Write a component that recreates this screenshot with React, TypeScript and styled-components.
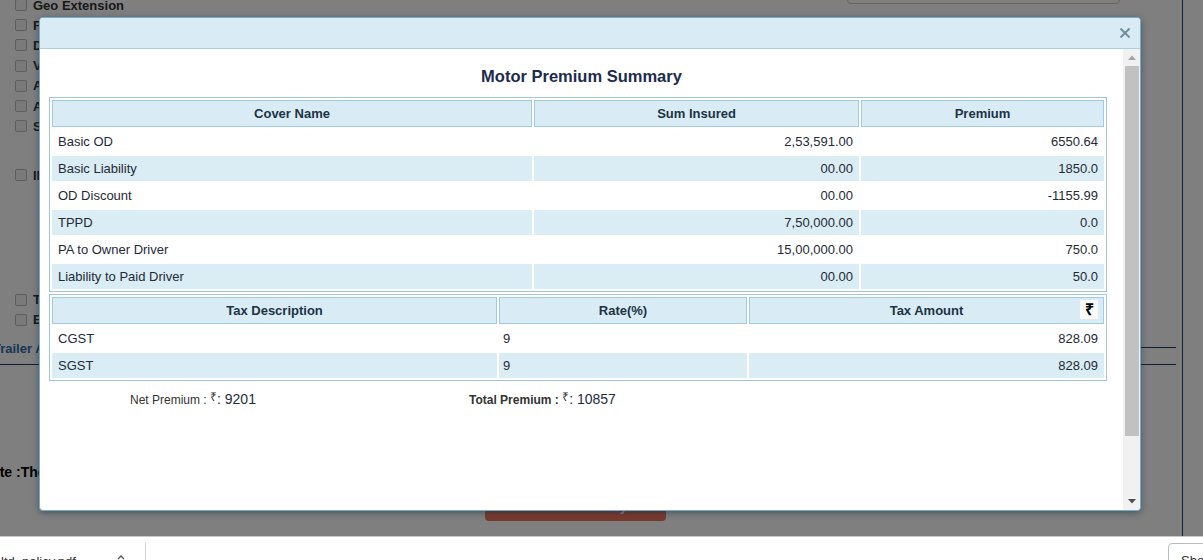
import React from "react";
import styled, { createGlobalStyle } from "styled-components";

const GlobalStyle = createGlobalStyle`
  *, *::before, *::after { box-sizing: border-box; }
  html, body { margin: 0; padding: 0; }
  body {
    font-family: "Liberation Sans", Arial, sans-serif;
    background: #fff;
    overflow: hidden;
  }
`;

const Page = styled.div`
  width: 1203px;
  height: 560px;
  display: flex;
  flex-direction: column;
  overflow: hidden;
`;

const Main = styled.div`
  position: relative;
  height: 536px;
  flex: none;
  overflow: hidden;
  background: #fff;
`;

/* ---------- background page (dimmed) ---------- */
const BgLayout = styled.div`
  display: flex;
  height: 100%;
`;

const BgPane = styled.div`
  width: 1183px;
  border-right: 1px solid #1a466a;
  display: flex;
  flex-direction: column;
`;

const TopArea = styled.div`
  display: flex;
  align-items: flex-start;
`;

const CheckList = styled.div`
  flex: 1;
  margin-top: -5px;
  padding-left: 15px;
  display: flex;
  flex-direction: column;
`;

const CheckRow = styled.div<{ $gap?: number }>`
  height: 20.2px;
  margin-top: ${(p) => p.$gap ?? 0}px;
  display: flex;
  align-items: center;
  gap: 6px;
`;

const CheckBox = styled.span`
  width: 12px;
  height: 12px;
  border: 1px solid #bbb;
  border-radius: 2px;
  background: #f4f4f4;
  flex: none;
`;

const CheckLabel = styled.span`
  font-size: 13px;
  font-weight: bold;
  color: #333;
  white-space: nowrap;
`;

const InputStub = styled.div`
  width: 273px;
  height: 34px;
  margin-top: -30px;
  margin-right: 62px;
  border: 1px solid #c8c8c8;
  border-radius: 4px;
  background: #fff;
`;

const SectionBar = styled.div`
  height: 35px;
  margin-right: 6px;
  border-bottom: 1px solid #1a466a;
  display: flex;
  align-items: flex-end;
  justify-content: space-between;
`;

const SectionTitle = styled.span`
  margin-left: -7px;
  padding-bottom: 7px;
  line-height: 16px;
  font-size: 13px;
  font-weight: bold;
  color: #2f6eaa;
  white-space: nowrap;
`;

const SectionCap = styled.span`
  width: 35px;
  height: 17px;
  border-top: 1px solid #1a466a;
`;

const NoteLine = styled.div`
  margin-top: 99px;
  margin-left: -19px;
  line-height: 16px;
  font-size: 14px;
  font-weight: bold;
  color: #000;
  white-space: nowrap;
`;

const PayButton = styled.div`
  margin-top: 11px;
  margin-left: 485px;
  width: 181px;
  height: 30px;
  border-radius: 4px;
  background: #f2745a;
  color: #fff;
  font-size: 14px;
  font-weight: bold;
  line-height: 30px;
  text-align: center;
`;

const Overlay = styled.div`
  position: absolute;
  inset: 0;
  background: rgba(0, 0, 0, 0.5);
`;

/* ---------- modal ---------- */
const Modal = styled.div`
  position: absolute;
  left: 39px;
  top: 17px;
  width: 1102px;
  height: 494px;
  border: 1px solid #76abc6;
  border-radius: 4px;
  background: #fff;
  box-shadow: 0 2px 7px rgba(0, 40, 70, 0.45);
  display: flex;
  flex-direction: column;
  overflow: hidden;
`;

const ModalHeader = styled.div`
  height: 31px;
  flex: none;
  background: #d9ecf5;
  border-bottom: 1px solid #a9d0e2;
  display: flex;
  align-items: center;
  justify-content: flex-end;
  padding-right: 10px;
`;

const CloseButton = styled.span`
  width: 10px;
  height: 10px;
  display: flex;
`;

const ModalBody = styled.div`
  flex: 1;
  display: flex;
  min-height: 0;
`;

const BodyContent = styled.div`
  flex: 1;
  overflow: hidden;
  padding-top: 17px;
`;

const Scrollbar = styled.div`
  width: 17px;
  flex: none;
  background: #f1f1f1;
  display: flex;
  flex-direction: column;
`;

const ScrollArrow = styled.div`
  height: 17px;
  flex: none;
  display: flex;
  align-items: center;
  justify-content: center;
`;

const ScrollThumb = styled.div`
  height: 370px;
  margin: 0 1px 0 2px;
  background: #c1c1c1;
  flex: none;
`;

const ScrollSpacer = styled.div`
  flex: 1;
`;

const Title = styled.div`
  text-align: center;
  font-size: 16.5px;
  font-weight: bold;
  line-height: 20px;
  color: #1b2c4c;
  margin-bottom: 11px;
`;

const TablesWrap = styled.div`
  padding: 0 16px 0 9px;
`;

const Table = styled.table<{ $gap?: number }>`
  width: 100%;
  table-layout: fixed;
  border-collapse: separate;
  border-spacing: 2px;
  border: 1px solid #9fc6d9;
  margin-top: ${(p) => p.$gap ?? 0}px;
  font-size: 13px;

  tbody tr:nth-child(even) td {
    background: #daecf4;
  }
`;

const Th = styled.th<{ $w: number }>`
  width: ${(p) => p.$w}px;
  height: 27px;
  padding: 0;
  border: 1px solid #a2cbe0;
  background: #d9ecf5;
  font-weight: bold;
  color: #1c3346;
  text-align: center;
  position: relative;
`;

const Td = styled.td<{ $align?: "left" | "right"; $padL?: number }>`
  height: 25px;
  padding: 0 6px 0 ${(p) => p.$padL ?? 6}px;
  text-align: ${(p) => p.$align ?? "left"};
  color: #1e2a36;
  background: #fff;
  white-space: nowrap;
`;

const RupeeBadge = styled.span`
  position: absolute;
  right: 5px;
  top: 2px;
  width: 18px;
  height: 19px;
  background: #fafafa;
  color: #000;
  font-size: 16px;
  font-weight: bold;
  line-height: 19px;
  text-align: center;
`;

const FooterRow = styled.div`
  display: flex;
  align-items: baseline;
  margin-top: 8px;
  line-height: 17px;
`;

const FooterBlock = styled.div<{ $offset?: number; $w?: number }>`
  margin-left: ${(p) => p.$offset ?? 0}px;
  width: ${(p) => (p.$w ? `${p.$w}px` : "auto")};
  white-space: nowrap;
`;

const FooterLabel = styled.span<{ $bold?: boolean }>`
  font-size: 12px;
  font-weight: ${(p) => (p.$bold ? "bold" : "normal")};
  color: #333;
`;

const RupeeSmall = styled.span`
  font-size: 12px;
  vertical-align: 3px;
  color: #333;
`;

const FooterValue = styled.span`
  font-size: 14px;
  color: #1d2c3d;
`;

/* ---------- download bar ---------- */
const DownloadBar = styled.div`
  height: 24px;
  flex: none;
  border-top: 1px solid #c9c9c9;
  background: #fff;
  display: flex;
  align-items: flex-start;
  overflow: hidden;
`;

const DownloadItem = styled.div`
  width: 146px;
  height: 40px;
  margin-top: 6px;
  border-right: 1px solid #d0d0d0;
  display: flex;
  align-items: flex-start;
  justify-content: space-between;
  padding: 11px 20px 0 1px;
  font-size: 13px;
  color: #333;
`;

const ShowAll = styled.div`
  margin-left: auto;
  margin-top: 6px;
  margin-right: -35px;
  width: 70px;
  height: 32px;
  border: 1px solid #bcbcbc;
  border-radius: 4px;
  padding: 9px 0 0 12px;
  font-size: 13px;
  color: #333;
`;

const coverRows = [
  ["Basic OD", "2,53,591.00", "6550.64"],
  ["Basic Liability", "00.00", "1850.0"],
  ["OD Discount", "00.00", "-1155.99"],
  ["TPPD", "7,50,000.00", "0.0"],
  ["PA to Owner Driver", "15,00,000.00", "750.0"],
  ["Liability to Paid Driver", "00.00", "50.0"],
];

const taxRows = [
  ["CGST", "9", "828.09"],
  ["SGST", "9", "828.09"],
];

const checks = [
  "Geo Extension",
  "Fibre Glass Fuel Tank",
  "Depreciation Cover",
  "Voluntary Deductible",
  "Anti-Theft Device",
  "Automobile Association",
  "Side Car",
];

export default function App() {
  return (
    <Page>
      <GlobalStyle />
      <Main>
        <BgLayout>
          <BgPane>
            <TopArea>
              <CheckList>
                {checks.map((c) => (
                  <CheckRow key={c}>
                    <CheckBox />
                    <CheckLabel>{c}</CheckLabel>
                  </CheckRow>
                ))}
                <CheckRow $gap={29}>
                  <CheckBox />
                  <CheckLabel>IMT 23 Cover</CheckLabel>
                </CheckRow>
                <CheckRow $gap={104}>
                  <CheckBox />
                  <CheckLabel>TPPD Restriction</CheckLabel>
                </CheckRow>
                <CheckRow>
                  <CheckBox />
                  <CheckLabel>Electrical Accessories</CheckLabel>
                </CheckRow>
              </CheckList>
              <InputStub />
            </TopArea>
            <SectionBar>
              <SectionTitle>Trailer Add On Covers</SectionTitle>
              <SectionCap />
            </SectionBar>
            <NoteLine>Note :The premium shown above is indicative</NoteLine>
            <PayButton>Proceed To Pay</PayButton>
          </BgPane>
        </BgLayout>
        <Overlay />
        <Modal>
          <ModalHeader>
            <CloseButton>
              <svg width="10" height="10" viewBox="0 0 10 10">
                <path d="M1.2 1.2 L8.8 8.8 M8.8 1.2 L1.2 8.8" stroke="#6e8fa0" strokeWidth="2" strokeLinecap="square" />
              </svg>
            </CloseButton>
          </ModalHeader>
          <ModalBody>
            <BodyContent>
              <Title>Motor Premium Summary</Title>
              <TablesWrap>
                <Table>
                  <thead>
                    <tr>
                      <Th $w={480}>Cover Name</Th>
                      <Th $w={325}>Sum Insured</Th>
                      <Th $w={243}>Premium</Th>
                    </tr>
                  </thead>
                  <tbody>
                    {coverRows.map(([n, s, p]) => (
                      <tr key={n}>
                        <Td>{n}</Td>
                        <Td $align="right">{s}</Td>
                        <Td $align="right">{p}</Td>
                      </tr>
                    ))}
                  </tbody>
                </Table>
                <Table $gap={2}>
                  <thead>
                    <tr>
                      <Th $w={445}>Tax Description</Th>
                      <Th $w={248}>Rate(%)</Th>
                      <Th $w={355}>
                        Tax Amount
                        <RupeeBadge>₹</RupeeBadge>
                      </Th>
                    </tr>
                  </thead>
                  <tbody>
                    {taxRows.map(([n, r, a]) => (
                      <tr key={n}>
                        <Td>{n}</Td>
                        <Td $padL={4}>{r}</Td>
                        <Td $align="right">{a}</Td>
                      </tr>
                    ))}
                  </tbody>
                </Table>
                <FooterRow>
                  <FooterBlock $offset={81} $w={339}>
                    <FooterLabel>Net Premium : </FooterLabel>
                    <RupeeSmall>₹</RupeeSmall>
                    <FooterValue>: 9201</FooterValue>
                  </FooterBlock>
                  <FooterBlock>
                    <FooterLabel $bold>Total Premium : </FooterLabel>
                    <RupeeSmall>₹</RupeeSmall>
                    <FooterValue>: 10857</FooterValue>
                  </FooterBlock>
                </FooterRow>
              </TablesWrap>
            </BodyContent>
            <Scrollbar>
              <ScrollArrow>
                <svg width="8" height="5" viewBox="0 0 8 5">
                  <path d="M0 5 L4 0.5 L8 5 Z" fill="#a3a3a3" />
                </svg>
              </ScrollArrow>
              <ScrollThumb />
              <ScrollSpacer />
              <ScrollArrow>
                <svg width="8" height="5" viewBox="0 0 8 5">
                  <path d="M0 0 L8 0 L4 4.5 Z" fill="#505050" />
                </svg>
              </ScrollArrow>
            </Scrollbar>
          </ModalBody>
        </Modal>
      </Main>
      <DownloadBar>
        <DownloadItem>
          <span>ltd_policy.pdf</span>
          <svg width="8" height="6" viewBox="0 0 8 6">
            <path d="M1 5 L4 2 L7 5" stroke="#555" strokeWidth="1.4" fill="none" />
          </svg>
        </DownloadItem>
        <ShowAll>Show all</ShowAll>
      </DownloadBar>
    </Page>
  );
}
